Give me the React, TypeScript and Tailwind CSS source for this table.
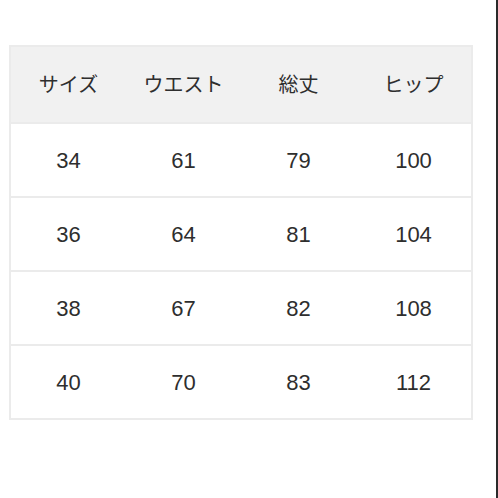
import React from "react";

const headers = ["サイズ", "ウエスト", "総丈", "ヒップ"];
const rows = [
  ["34", "61", "79", "100"],
  ["36", "64", "81", "104"],
  ["38", "67", "82", "108"],
  ["40", "70", "83", "112"],
];

export default function App() {
  return (
    <div
      className="flex h-[498px] w-[498px] bg-white text-[#2e2e2e]"
      style={{ fontFamily: '"Liberation Sans", "Noto Sans CJK JP", sans-serif' }}
    >
      <div className="flex-1 pl-[9px] pt-[45px]">
        <div className="w-[464px] border-2 border-[#ebebeb]">
          <div className="grid h-[75px] grid-cols-4 items-center bg-[#f1f1f1] text-[20px]">
            {headers.map((h) => (
              <div key={h} className="text-center">
                {h}
              </div>
            ))}
          </div>
          {rows.map((r, i) => (
            <div
              key={i}
              className="grid h-[74px] grid-cols-4 items-center border-t-2 border-[#ebebeb] text-[22px]"
            >
              {r.map((c, j) => (
                <div key={j} className="text-center">
                  {c}
                </div>
              ))}
            </div>
          ))}
        </div>
      </div>
      <div className="w-[2px] bg-[#2a2a2a]" />
    </div>
  );
}
